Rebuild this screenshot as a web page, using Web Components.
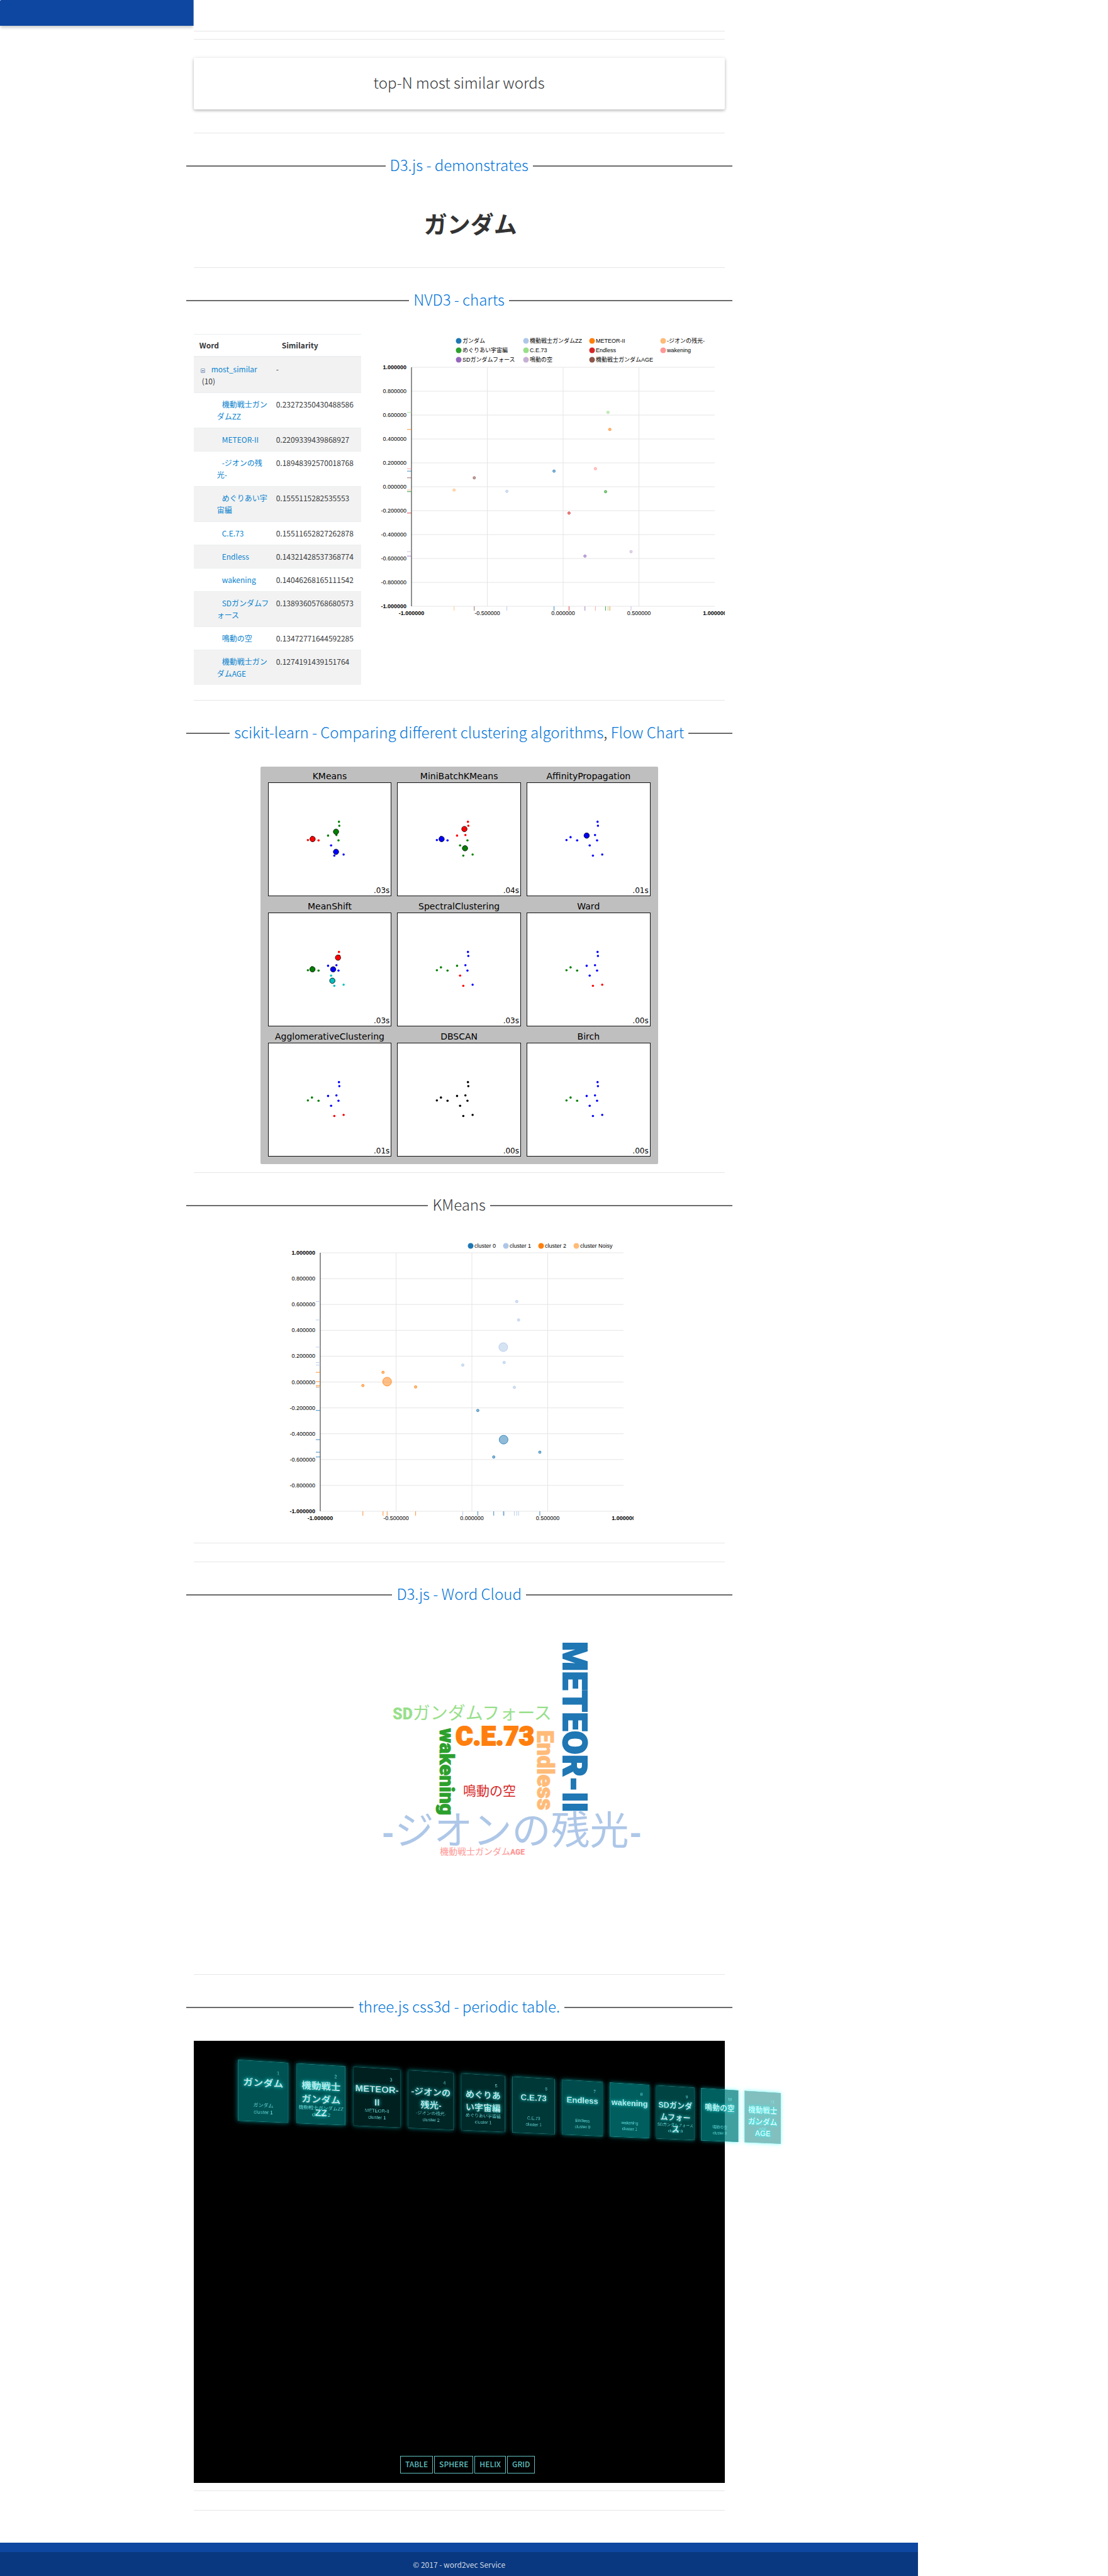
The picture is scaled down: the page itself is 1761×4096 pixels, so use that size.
<!DOCTYPE html>
<html lang="ja">
<head>
<meta charset="utf-8">
<title>word2vec Service</title>
<style>
html, body { margin: 0; background: #fff; }
body { font-family: "Noto Sans CJK JP", "Noto Sans", sans-serif; font-size: 12px; line-height: 19px; color: #373a3c; }
</style>
</head>
<body>
<w2v-page>
  <w2v-header slot="header"></w2v-header>
  <w2v-rule></w2v-rule>
  <w2v-rule style="--before:12px"></w2v-rule>
  <w2v-card>top-N most similar words</w2v-card>
  <w2v-rule></w2v-rule>
  <w2v-heading><w2v-link href="#d3">D3.js - demonstrates</w2v-link></w2v-heading>
  <w2v-word>ガンダム</w2v-word>
  <w2v-rule style="--before:28px"></w2v-rule>
  <w2v-heading><w2v-link href="#nvd3">NVD3 - charts</w2v-link></w2v-heading>
  <w2v-columns>
    <w2v-tree-table slot="side"></w2v-tree-table>
    <w2v-scatter kind="words"></w2v-scatter>
  </w2v-columns>
  <w2v-rule style="--before:24px"></w2v-rule>
  <w2v-heading><w2v-link href="#compare">scikit-learn - Comparing different clustering algorithms</w2v-link>, <w2v-link href="#flow">Flow Chart</w2v-link></w2v-heading>
  <w2v-cluster-grid></w2v-cluster-grid>
  <w2v-rule style="--before:13px"></w2v-rule>
  <w2v-heading>KMeans</w2v-heading>
  <w2v-scatter kind="clusters"></w2v-scatter>
  <w2v-rule></w2v-rule>
  <w2v-rule style="--before:29px"></w2v-rule>
  <w2v-heading><w2v-link href="#cloud">D3.js - Word Cloud</w2v-link></w2v-heading>
  <w2v-cloud></w2v-cloud>
  <w2v-rule></w2v-rule>
  <w2v-heading><w2v-link href="#periodic">three.js css3d - periodic table.</w2v-link></w2v-heading>
  <w2v-scene></w2v-scene>
  <w2v-rule style="--before:12px"></w2v-rule>
  <w2v-rule style="--before:30px"></w2v-rule>
  <w2v-footer slot="footer">© 2017 - word2vec Service</w2v-footer>
</w2v-page>
<script>
const define = (name, css, html) => customElements.define(name, class extends HTMLElement {
  constructor() {
    super();
    this.attachShadow({ mode: 'open' });
  }
  connectedCallback() {
    const body = typeof html === 'function' ? html(this) : html;
    this.shadowRoot.innerHTML = `<style>:host{display:block}*{box-sizing:border-box}${css}</style>${body}`;
  }
});

// name, x, y, colour, similarity, cluster, card opacity
const WORDS = [
  ['ガンダム', -.060, .131, '#1f77b4', '', 1, .65],
  ['機動戦士ガンダムZZ', -.371, -.038, '#aec7e8', '0.23272350430488586', 2, .65],
  ['METEOR-II', .308, .480, '#ff7f0e', '0.2209339439868927', 1, .25],
  ['-ジオンの残光-', -.719, -.027, '#ffbb78', '0.18948392570018768', 2, .29],
  ['めぐりあい宇宙編', .280, -.041, '#2ca02c', '0.1555115282535553', 1, .32],
  ['C.E.73', .296, .623, '#98df8a', '0.15511652827262878', 1, .43],
  ['Endless', .039, -.220, '#d62728', '0.14321428537368774', 0, .6],
  ['wakening', .213, .151, '#ff9896', '0.14046268165111542', 1, .74],
  ['SDガンダムフォース', .144, -.580, '#9467bd', '0.13893605768680573', 0, .53],
  ['鳴動の空', .448, -.543, '#c5b0d5', '0.13472771644592285', 0, .75],
  ['機動戦士ガンダムAGE', -.586, .075, '#8c564b', '0.1274191439151764', 2, .49]
];

define('w2v-page', `
  .page { width: 82.87%; }
  main { max-width: 844px; margin: 0 auto; padding: 8px 0 51px; }
`, `<div class="page"><slot name="header"></slot><main><slot></slot></main><slot name="footer"></slot></div>`);

define('w2v-header', `
  :host { height: 41px; }
  header { height: 41px; width: calc((100% - 844px) / 2); background: #0d47a1; box-shadow: 0 4px 4px -1px rgba(0,0,0,.2); clip-path: inset(0 0 -10px 0); border-radius: 2px 0 0 0; }
`, `<header></header>`);

define('w2v-rule', `
  hr { margin: 0; padding: 0; border: 0; height: 1px; background: #e6e6e6; }
  :host { padding-top: var(--before, 0); }
`, `<hr>`);

define('w2v-card', `
  :host { padding: 29px 0 37px; }
  h3 { margin: 0; height: 82px; padding-bottom: 4px; display: flex; align-items: center; justify-content: center; background: #fff; border-radius: 2px; font-size: 24px; line-height: 36px; font-weight: 300;
    box-shadow: 0 2px 4px rgba(0,0,0,.2), 0 1px 6px rgba(0,0,0,.12); }
`, `<h3><slot></slot></h3>`);

define('w2v-heading', `
  :host { padding: 34px 0 35px; margin: 0 -12px; }
  h2 { margin: 0; display: flex; align-items: center; gap: 7px; font-size: 24px; line-height: 32px; font-weight: 300; white-space: nowrap; }
  h2::before, h2::after { content: ""; flex: 1; height: 2px; background: #6b6b6b; }
  span { padding-bottom: 4px; }
`, `<h2><span><slot></slot></span></h2>`);

define('w2v-link', `
  :host { display: inline; }
  a { color: #0275d8; text-decoration: none; }
`, el => `<a href="${el.getAttribute('href')}"><slot></slot></a>`);

define('w2v-word', `
  p { margin: 0; padding: 0 0 4px 36px; text-align: center; font-size: 37px; line-height: 76px; font-weight: 700; color: #333; }
`, `<p><slot></slot></p>`);

define('w2v-columns', `
  :host { display: grid; grid-template-columns: 266px 1fr; column-gap: 23px; align-items: start; }
`, `<slot name="side"></slot><slot></slot>`);

define('w2v-tree-table', `
  table { width: 100%; border-collapse: separate; border-spacing: 0; table-layout: fixed; }
  col:first-child { width: 131px; }
  th { text-align: left; padding: 8px 9px; font-weight: 700; border-top: 1px solid #eceeef; border-bottom: 2px solid #eceeef; line-height: 18px; }
  td { vertical-align: top; padding: 8px 9px 9px 0; border-top: 1px solid #eceeef; }
  tbody tr:first-child td { border-top: 0; padding-top: 9px; }
  tbody tr:nth-child(odd) { background: #f2f2f2; }
  td:first-child { padding-left: 37px; text-indent: 8px; line-break: auto; }
  tr.root td:first-child { padding-left: 13px; text-indent: -2px; }
  a { color: #0b84cf; text-decoration: none; }
  button { width: 7px; height: 7px; padding: 0; margin: 0 10px 0 0; border: 1px solid #8ca0bb; border-radius: 1px; background: linear-gradient(#3b5a85, #3b5a85) center / 3px 1px no-repeat, linear-gradient(#fff, #c8d4e4); vertical-align: 0; }
`, () => `<table>
  <colgroup><col><col></colgroup>
  <thead><tr><th>Word</th><th>Similarity</th></tr></thead>
  <tbody>
    <tr class="root"><td><button type="button" aria-label="collapse"></button><a href="#most">most_similar</a> (10)</td><td>-</td></tr>
    ${WORDS.slice(1).map(w => `<tr><td><a href="#w">${w[0]}</a></td><td>${w[4]}</td></tr>`).join('')}
  </tbody></table>`);

const GREY = '#e5e5e5';
function scatter(kind) {
  const words = kind === 'words';
  const L = 57, W = 482, T = words ? 53 : 22, H = words ? 380 : 411, total = words ? 557 : 483;
  const px = x => L + (x + 1) / 2 * W, py = y => T + (1 - y) / 2 * H;
  const colours = ['#1f77b4', '#aec7e8', '#ff7f0e', '#ffbb78'];
  let s = '';
  for (let i = 0; i <= 10; i++) {
    const v = 1 - i * .2, y = T + H * i / 10;
    s += `<line x1="${L}" y1="${y}" x2="${L + W}" y2="${y}" stroke="${GREY}"/>`;
    s += `<text class="${i % 10 ? '' : 'b'}" x="${L - 8}" y="${y + 3}" text-anchor="end">${(i === 5 ? 0 : v).toFixed(6)}</text>`;
  }
  for (let i = 0; i <= 4; i++) {
    const v = -1 + i * .5, x = px(v);
    if (i && i < 4) s += `<line x1="${x}" y1="${T}" x2="${x}" y2="${T + H}" stroke="${GREY}"/>`;
    s += `<text class="${i % 4 ? '' : 'b'}" x="${x}" y="${T + H + 14}" text-anchor="middle">${v.toFixed(6)}</text>`;
  }
  s += `<line x1="${L}" y1="${T}" x2="${L}" y2="${T + H}" stroke="#222"/>`;
  const pts = WORDS.map(w => [w[1], w[2], words ? w[3] : colours[w[5]], 2]);
  if (!words) pts.push([.209, -.446, colours[0], 7], [.207, .27, colours[1], 7], [-.559, .003, colours[2], 7]);
  for (const [x, y, c, r] of pts) {
    s += `<circle cx="${px(x)}" cy="${py(y)}" r="${r}" fill="${c}" fill-opacity=".5" stroke="${c}" stroke-opacity=".8"/>`;
    s += `<path d="M${L - 7} ${py(y)}H${L}M${px(x)} ${T + H}v7" stroke="${c}" stroke-opacity=".85"/>`;
  }
  const legend = words
    ? WORDS.map((w, i) => [w[0], w[3], [132, 239, 344, 457][i % 4], 11 + 15 * Math.floor(i / 4)])
    : ['cluster 0', 'cluster 1', 'cluster 2', 'cluster Noisy'].map((n, i) => [n, colours[i], 296 + 56 * i, 11]);
  for (const [n, c, x, y] of legend)
    s += `<circle cx="${x}" cy="${y}" r="4.5" fill="${c}"/><text x="${x + 6}" y="${y + 3}">${n}</text>`;
  return `<svg viewBox="0 0 555 ${total}" role="img" aria-label="scatter chart">${s}</svg>`;
}
define('w2v-scatter', `
  :host { max-width: 555px; width: 100%; margin: 0 auto; }
  svg { display: block; width: 100%; overflow: hidden; }
  text { font: 9px "Liberation Sans", "Noto Sans CJK JP", sans-serif; fill: #000; }
  .b { font-weight: 700; }
`, el => scatter(el.getAttribute('kind')));

// One letter per word, in the order of WORDS; then the cluster centres.
const PANELS = [
  ['KMeans', '.03s', 'grgrggbgbbr', [['r', -.565, .008], ['g', .2, .27], ['b', .2, -.446]]],
  ['MiniBatchKMeans', '.04s', 'rbrbgrgrggb', [['b', -.565, .008], ['r', .18, .365], ['g', .2, -.32]]],
  ['AffinityPropagation', '.01s', 'bbbbbbbbbbb', [['b', -.06, .131]]],
  ['MeanShift', '.03s', 'bgrgbrcbccg', [['r', .264, .42], ['g', -.57, .007], ['b', .106, .004], ['c', .08, -.4]]],
  ['SpectralClustering', '.03s', 'ggbgbbrbrbg', []],
  ['Ward', '.00s', 'bgbgbbbbrrg', []],
  ['AgglomerativeClustering', '.01s', 'bgbgbbbbrrg', []],
  ['DBSCAN', '.00s', 'kkkkkkkkkkk', []],
  ['Birch', '.00s', 'bgbgbbbbbbg', []]
];
const INK = { r: '#f00', g: '#008000', b: '#00f', c: '#00bfbf', k: '#000' };
define('w2v-cluster-grid', `
  .board { max-width: 632px; height: 632px; margin: 0 auto; padding: 6px 12px 12px; background: #bfbfbf; border-radius: 2px; display: grid; grid-template-columns: repeat(3, 1fr); grid-template-rows: repeat(3, 200px); column-gap: 9px; row-gap: 7px; font-family: "DejaVu Sans", sans-serif; color: #000; }
  figure { margin: 0; position: relative; }
  figcaption { font-size: 14px; line-height: 19px; text-align: center; white-space: nowrap; }
  svg { display: block; width: 100%; height: 181px; background: #fff; border: 1px solid #111; }
  time { position: absolute; right: 3px; bottom: 0; font-size: 12px; line-height: 18px; }
`, () => `<div class="board">${PANELS.map(([n, t, k, cs]) => {
  const at = (x, y) => `cx="${98 + 49 * x}" cy="${90 - 45 * y}"`;
  return `<figure><figcaption>${n}</figcaption><svg viewBox="0 0 196 180">${
    WORDS.map((w, i) => `<circle ${at(w[1], w[2])} r="1.8" fill="${INK[k[i]]}"/>`).join('')}${
    cs.map(([c, x, y]) => `<circle ${at(x, y)} r="4.3" fill="${INK[c]}" stroke="#000" stroke-width=".8"/>`).join('')
  }</svg><time>${t}</time></figure>`;
}).join('')}</div>`);

define('w2v-cloud', `
  svg { display: block; width: 100%; }
  text { font-family: "Noto Sans CJK JP", sans-serif; font-weight: 400; }
  .i { font-family: Impact, Roboto, "Liberation Sans", sans-serif; font-weight: 900; }
  .h { stroke-width: 2px; }
`, `<svg viewBox="0 0 844 550" role="img" aria-label="word cloud">
  <text class="i h" font-size="54" fill="#1f77b4" stroke="#1f77b4" transform="translate(587 21) rotate(90)">METEOR-II</text>
  <text y="344" x="298" font-size="62" fill="#aec7e8"><tspan class="i" font-size="48">-</tspan>ジオンの残光<tspan class="i" font-size="48">-</tspan></text>
  <text x="316" y="145" font-size="28" fill="#98df8a"><tspan class="i" font-size="25">SD</tspan>ガンダムフォース</text>
  <text class="i h" x="416" y="186" font-size="42" fill="#ff7f0e" stroke="#ff7f0e">C.E.73</text>
  <text class="i" font-size="32" fill="#2ca02c" stroke="#2ca02c" transform="translate(391 159) rotate(90)">wakening</text>
  <text class="i" font-size="36" fill="#ffbb78" stroke="#ffbb78" transform="translate(546 162) rotate(90)">Endless</text>
  <text x="428" y="266" font-size="21" fill="#d62728">鳴動の空</text>
  <text x="391" y="360" font-size="14" fill="#ff9896">機動戦士ガンダム<tspan class="i" font-size="12">AGE</tspan></text>
</svg>`);

define('w2v-scene', `
  :host { position: relative; z-index: 0; height: 703px; background: #000; display: flex; flex-direction: column; justify-content: flex-end; align-items: center; }
  .plane { position: absolute; left: 0; top: 0; width: 1520px; height: 160px; display: flex; gap: 20px; transform-origin: 0 0;
    transform: matrix3d(.6887, .0455, 0, .00012961, 0, .607, 0, 0, 0, 0, 1, 0, 70, 30, 0, 1);
    font-family: "Liberation Sans", "Noto Sans CJK JP", sans-serif; text-align: center; }
  article { flex: 0 0 120px; height: 160px; position: relative; border: 1px solid rgba(127,255,255,.25); box-shadow: 0 0 12px rgba(0,255,255,.5); color: rgba(127,255,255,.75); font-size: 12px; line-height: 18px; }
  .number { position: absolute; top: 20px; right: 20px; }
  .symbol { position: absolute; z-index: 1; top: 39px; left: 2px; right: 2px; line-break: loose; font-size: 24px; line-height: 36px; font-weight: 700; color: rgba(255,255,255,.75); text-shadow: 0 0 10px rgba(0,255,255,.95); }
  .details { position: absolute; bottom: 15px; left: 0; right: 0; }
  nav { display: flex; gap: 2px; margin-bottom: 15px; padding-left: 27px; }
  button { height: 28px; padding: 0 7px 2px; border: 1px solid #5fbfbf; background: transparent; color: #5fbfbf; font: 500 12px/18px "Noto Sans CJK JP", sans-serif; }
`, () => `<div class="plane">${WORDS.map((w, i) => `<article style="background:rgba(0,127,127,${w[6]})"><div class="number">${i + 1}</div><div class="symbol">${w[0]}</div><div class="details">${w[0]}<br>cluster ${w[5]}</div></article>`).join('')}</div>
<nav>${['TABLE', 'SPHERE', 'HELIX', 'GRID'].map(b => `<button type="button">${b}</button>`).join('')}</nav>`);

define('w2v-footer', `
  footer { padding-top: 15px; background: #0d47a1; }
  p { margin: 0; padding: 10px 0; background: #0a3880; color: rgba(255,255,255,.8); text-align: center; font-size: 12px; line-height: 19px; }
`, `<footer><p><slot></slot></p></footer>`);
</script>
</body>
</html>
